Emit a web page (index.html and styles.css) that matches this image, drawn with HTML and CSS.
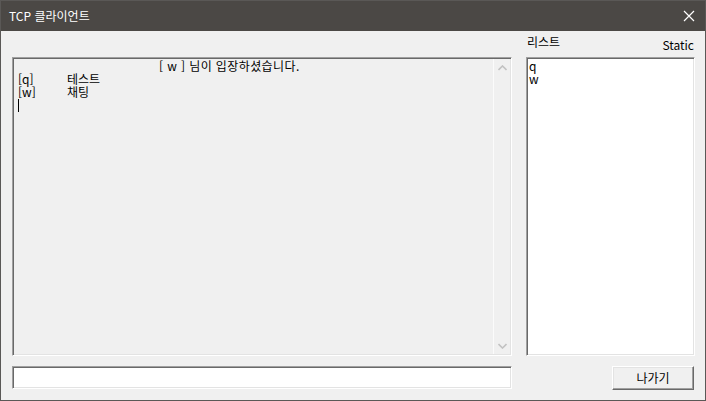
FILE: index.html
```html
<!DOCTYPE html>
<html lang="ko">
<head>
<meta charset="utf-8">
<title>TCP 클라이언트</title>
<link rel="stylesheet" href="styles.css">
</head>
<body>
<div class="window">
  <div class="titlebar">
    <span class="title">TCP 클라이언트</span>
    <svg class="close" width="12" height="12" viewBox="0 0 12 12"><path d="M1 1 L11 11 M11 1 L1 11" stroke="#ffffff" stroke-width="1.2" fill="none"/></svg>
  </div>
  <div class="client">
    <div class="toprow">
      <div class="leftcol">
        <div class="chatbox">
          <div class="chattext">
            <div class="line notice">[ w ] 님이 입장하셨습니다.</div>
            <div class="line msg"><span class="who">[q]</span><span>테스트</span></div>
            <div class="line msg"><span class="who">[w]</span><span>채팅</span></div>
            <div class="line"><span class="caret"></span></div>
          </div>
          <div class="scrollbar">
            <svg class="arrow" width="9" height="6" viewBox="0 0 9 6"><path d="M0.5 5 L4.5 1 L8.5 5" stroke="#c2c2c2" stroke-width="1.6" fill="none"/></svg>
            <svg class="arrow" width="9" height="6" viewBox="0 0 9 6"><path d="M0.5 1 L4.5 5 L8.5 1" stroke="#c2c2c2" stroke-width="1.6" fill="none"/></svg>
          </div>
        </div>
      </div>
      <div class="rightcol">
        <div class="listhead">
          <span class="label">리스트</span>
          <span class="static">Static</span>
        </div>
        <div class="listbox">
          <div class="item">q</div>
          <div class="item">w</div>
        </div>
      </div>
    </div>
    <div class="bottomrow">
      <div class="input"></div>
      <div class="button">나가기</div>
    </div>
  </div>
</div>
</body>
</html>
```
FILE: styles.css
```css
* { box-sizing: border-box; }
html, body { margin: 0; padding: 0; }
body {
  width: 706px;
  height: 401px;
  overflow: hidden;
  font-family: "Noto Sans CJK KR", "Noto Sans", sans-serif;
  font-size: 12px;
  color: #000;
  background: #f0f0f0;
}
.window {
  width: 706px;
  height: 401px;
  border: 1px solid #5a5856;
  display: flex;
  flex-direction: column;
  background: #f0f0f0;
}
.titlebar {
  height: 30px;
  background: #4b4845;
  color: #ffffff;
  display: flex;
  align-items: center;
  justify-content: space-between;
  padding: 0 10px 0 8px;
  flex: none;
}
.title {
  font-size: 12px;
  line-height: 14px;
}
.close { display: block; }
.client {
  flex: 1;
  padding: 0 10px 0 11px;
  display: flex;
  flex-direction: column;
}
.toprow {
  display: flex;
  gap: 14px;
}
.leftcol {
  width: 500px;
  padding-top: 26px;
}
.chatbox {
  height: 299px;
  display: flex;
  border: 1px solid;
  border-color: #a0a0a0 #ffffff #ffffff #a0a0a0;
  box-shadow: inset 1px 1px 0 #696969, inset -1px -1px 0 #e3e3e3;
  background: #f0f0f0;
}
.chattext {
  flex: 1;
  padding: 1px 0 0 5px;
}
.line {
  height: 13px;
  line-height: 13px;
  white-space: nowrap;
  display: flex;
}
.notice { padding-left: 141px; letter-spacing: 0.4px; }
.who { width: 49px; }
.caret {
  display: block;
  width: 1px;
  height: 13px;
  margin-top: 1px;
  background: #000;
}
.scrollbar {
  width: 18px;
  border-left: 1px solid #fbfbfb;
  border-right: 1px solid #e3e3e3;
  margin: 1px 0 1px 0;
  display: flex;
  flex-direction: column;
  justify-content: space-between;
  align-items: center;
  padding: 6px 0 5px 0;
}
.arrow { display: block; }
.rightcol {
  width: 169px;
  display: flex;
  flex-direction: column;
}
.listhead {
  height: 26px;
  display: flex;
  justify-content: space-between;
  align-items: flex-start;
  padding: 4px 0 0 1px;
  line-height: 14px;
}
.static {
  margin-top: 3px;
  padding-right: 1px;
}
.listbox {
  height: 299px;
  background: #ffffff;
  border: 1px solid;
  border-color: #a0a0a0 #ffffff #ffffff #a0a0a0;
  box-shadow: inset 1px 1px 0 #696969, inset -1px -1px 0 #e3e3e3;
  padding: 1px 0 0 2px;
}
.item {
  height: 13px;
  line-height: 13px;
}
.bottomrow {
  margin-top: 10px;
  display: flex;
  justify-content: space-between;
}
.input {
  width: 500px;
  height: 23px;
  background: #ffffff;
  border: 1px solid;
  border-color: #a0a0a0 #ffffff #ffffff #a0a0a0;
  box-shadow: inset 1px 1px 0 #696969, inset -1px -1px 0 #e3e3e3;
}
.button {
  width: 82px;
  height: 24px;
  margin-right: 1px;
  border: 1px solid;
  border-color: #ffffff #696969 #696969 #ffffff;
  box-shadow: inset -1px -1px 0 #a0a0a0, inset 1px 1px 0 #e3e3e3;
  background: #f0f0f0;
  display: flex;
  align-items: center;
  justify-content: center;
  line-height: 14px;
}
```
